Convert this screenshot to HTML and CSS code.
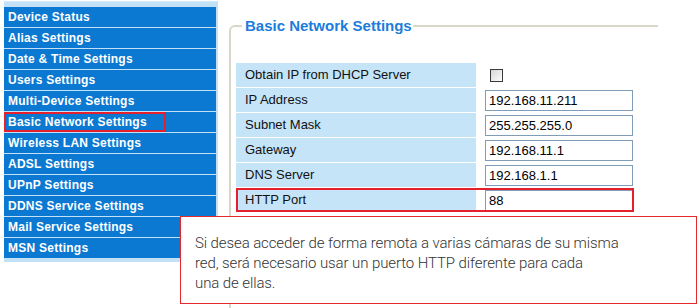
FILE: index.html
```html
<!DOCTYPE html>
<html lang="es">
<head>
  <meta charset="UTF-8">
  <title>Basic Network Settings</title>
  <link rel="stylesheet" href="styles.css">
</head>
<body>
  <div class="page">
    <ul class="menu">
      <li>Device Status</li>
      <li>Alias Settings</li>
      <li>Date &amp; Time Settings</li>
      <li>Users Settings</li>
      <li>Multi-Device Settings</li>
      <li class="active"><span>Basic Network Settings</span></li>
      <li>Wireless LAN Settings</li>
      <li>ADSL Settings</li>
      <li>UPnP Settings</li>
      <li>DDNS Service Settings</li>
      <li>Mail Service Settings</li>
      <li>MSN Settings</li>
    </ul>

    <div class="content">
      <fieldset class="panel">
        <legend>Basic Network Settings</legend>
        <div class="form">
          <div class="row">
            <div class="label">Obtain IP from DHCP Server</div>
            <div class="value"><input type="checkbox" class="check"></div>
          </div>
          <div class="row">
            <div class="label">IP Address</div>
            <div class="value"><input type="text" value="192.168.11.211"></div>
          </div>
          <div class="row">
            <div class="label">Subnet Mask</div>
            <div class="value"><input type="text" value="255.255.255.0"></div>
          </div>
          <div class="row">
            <div class="label">Gateway</div>
            <div class="value"><input type="text" value="192.168.11.1"></div>
          </div>
          <div class="row">
            <div class="label">DNS Server</div>
            <div class="value"><input type="text" value="192.168.1.1"></div>
          </div>
          <div class="row marked">
            <div class="label">HTTP Port</div>
            <div class="value"><input type="text" value="88"></div>
          </div>
        </div>
      </fieldset>
    </div>

    <div class="note">
      Si desea acceder de forma remota a varias cámaras de su misma<br>
      red, será necesario usar un puerto HTTP diferente para cada<br>
      una de ellas.
    </div>
  </div>
</body>
</html>
```

FILE: styles.css
```css
* { box-sizing: border-box; }
body {
  margin: 0;
  background: #fff;
  font-family: "Liberation Sans", Arial, sans-serif;
}
.page {
  position: relative;
  display: flex;
  align-items: flex-start;
  height: 308px;
  padding: 1px 0 0 4px;
  overflow: hidden;
}

/* left menu */
.menu {
  list-style: none;
  margin: 0;
  padding: 5px 0 4px;
  width: 214px;
  background: #c2e0f6;
  border-top: 1px solid #d6ebfa;
  border-right: 2px solid #c2e0f6;
}
.menu li {
  height: 20px;
  line-height: 20px;
  margin-bottom: 1px;
  padding-left: 4px;
  background: #0b79d2;
  color: #fff;
  font-size: 12px;
  font-weight: bold;
  letter-spacing: 0.25px;
  white-space: nowrap;
}
.menu li:last-child { margin-bottom: 0; }
.menu li.active { padding-left: 0; }
.menu li.active span {
  display: inline-block;
  width: 162px;
  height: 20px;
  line-height: 16px;
  padding-left: 2px;
  border: 2px solid #e3202b;
}

/* settings panel */
.content {
  margin-left: 11px;
  padding-top: 16px;
}
.panel {
  margin: 0;
  min-width: 0;
  width: 429px;
  height: 320px;
  padding: 28px 0 0 5px;
  border: 2px solid #d9d7ca;
  border-right: none;
  border-radius: 6px 0 0 0;
}
.panel legend {
  margin-left: 6px;
  padding: 0 1px 0 3px;
  color: #1c7ddb;
  font-size: 15px;
  font-weight: bold;
  line-height: 18px;
}
.form { width: 398px; }
.row {
  display: grid;
  grid-template-columns: 240px 1fr;
  column-gap: 1px;
  height: 24px;
  margin-bottom: 1px;
}
.row.marked {
  outline: 2px solid #e3202b;
  outline-offset: -2px;
}
.label {
  background: #c6e4f8;
  padding-left: 9px;
  line-height: 24px;
  font-size: 13px;
  color: #111;
}
.value {
  display: flex;
  align-items: center;
  padding-left: 8px;
}
.value input[type="text"] {
  width: 148px;
  height: 21px;
  margin: 0;
  padding: 0 3px;
  border: 1px solid #7f9db9;
  font-family: "Liberation Sans", Arial, sans-serif;
  font-size: 13px;
  color: #000;
  outline: none;
}
.check {
  appearance: none;
  width: 13px;
  height: 13px;
  margin: 0 0 0 5px;
  border: 1px solid #3a3a3a;
  background: linear-gradient(135deg, #d6d6d6, #fdfdfd);
}

/* callout */
.note {
  position: absolute;
  left: 180px;
  top: 216px;
  width: 517px;
  height: 88px;
  padding: 16px 14px;
  background: #fff;
  border: 1px solid #e4282e;
  font-family: Roboto, "Liberation Sans", sans-serif;
  font-weight: 300;
  font-size: 15px;
  line-height: 20px;
  letter-spacing: -0.1px;
  color: #333;
}
```
